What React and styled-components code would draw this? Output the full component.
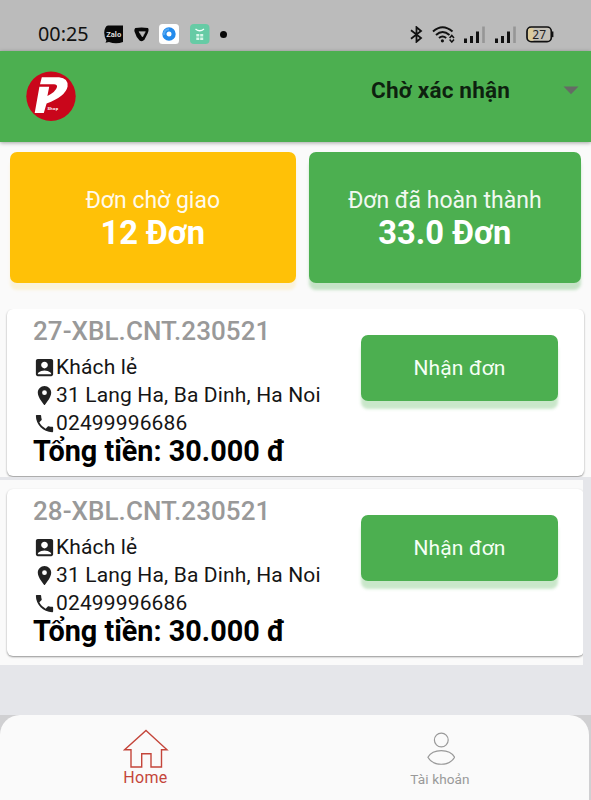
import React from 'react'
import styled, { createGlobalStyle } from 'styled-components'
import { MdAccountBox, MdLocationOn, MdPhone } from 'react-icons/md'

const GlobalStyle = createGlobalStyle`
  body {
    margin: 0;
    background: #fafafa;
    font-family: Roboto, "Liberation Sans", sans-serif;
  }
  svg {
    display: block;
    flex: none;
  }
`

const Screen = styled.div`
  display: flex;
  flex-direction: column;
  width: 591px;
  height: 800px;
  overflow: hidden;
  background: #fafafa;
`

const StatusBar = styled.div`
  display: flex;
  justify-content: space-between;
  box-sizing: border-box;
  height: 51px;
  padding: 17px 37px 0;
  background: #bbb;
`

const StatusGroup = styled.div`
  display: flex;
  align-items: center;
  height: 34px;
  gap: ${props => props.$gap};
`

const Clock = styled.span`
  width: 56.5px;
  padding-left: 1px;
  box-sizing: border-box;
  font: 19.8px/34px "Noto Sans", "Open Sans", sans-serif;
  color: #111;
`

const Header = styled.header`
  position: relative;
  display: flex;
  justify-content: space-between;
  box-sizing: border-box;
  height: 91px;
  padding: 20px 12px 0 26px;
  background: #4caf50;
  box-shadow: 0 1px 4px rgba(0, 0, 0, 0.35);
`

const Dropdown = styled.button`
  display: flex;
  align-items: center;
  justify-content: space-between;
  width: 208px;
  height: 39px;
  padding: 0;
  border: 0;
  background: none;
  font: 700 22.6px/26px Roboto, sans-serif;
  letter-spacing: 0.15px;
  color: rgba(0, 0, 0, 0.82);
`

const Stats = styled.section`
  display: grid;
  grid-template-columns: 285.5px 272.5px;
  column-gap: 13px;
  padding: 10px 10px 26px;
`

const StatCard = styled.div`
  display: flex;
  flex-direction: column;
  align-items: center;
  justify-content: center;
  box-sizing: border-box;
  height: 131px;
  padding-top: 3px;
  border-radius: 7px;
  color: #fff;
  background: ${props => props.$color};
  box-shadow: 0 7px 3px ${props => props.$shadow};
`

const StatLabel = styled.span`
  font-size: 23px;
  line-height: 28px;
  opacity: 0.92;
`

const StatValue = styled.strong`
  font-size: 32.7px;
  line-height: 37px;
`

const OrderList = styled.main`
  flex: 1;
  background: #e5e6ea;
`

const OrderSlot = styled.div`
  box-sizing: border-box;
  overflow: hidden;
  height: ${props => props.$height};
  margin: ${props => props.$margin || 0};
  padding: ${props => props.$padding};
  background: #fafafa;
`

const OrderCard = styled.article`
  display: flex;
  justify-content: space-between;
  box-sizing: border-box;
  width: 577px;
  height: 167px;
  padding: 7px 26px 0 26px;
  border-radius: 6px;
  background: #fff;
  box-shadow: 0 1px 2px rgba(0, 0, 0, 0.42);
`

const OrderId = styled.h2`
  margin: 0 0 7px;
  font-size: 26px;
  font-weight: 500;
  line-height: 30px;
  letter-spacing: 0.06px;
  color: #999;
`

const InfoRow = styled.div`
  display: flex;
  align-items: center;
  height: 28px;
  font-size: 21px;
  line-height: 28px;
  letter-spacing: 0.15px;
  white-space: nowrap;
  color: #151515;
  svg {
    color: #222;
  }
`

const Total = styled.div`
  margin-top: -2px;
  font-size: 28.8px;
  font-weight: 700;
  line-height: 32px;
  color: #000;
`

const AcceptButton = styled.button`
  width: 197px;
  height: 66px;
  margin: 19px 0 0;
  padding: 0;
  border: 0;
  border-radius: 7px;
  background: #4caf50;
  box-shadow: 0 8px 3px rgba(76, 175, 80, 0.3);
  font: 21px/28px Roboto, sans-serif;
  letter-spacing: 0.15px;
  color: #f5fff5;
`

const NavBack = styled.div`
  background: #d0d0d2;
`

const BottomNav = styled.nav`
  display: flex;
  width: 589px;
  height: 85px;
  border-radius: 20px 20px 0 0;
  background: #fafafa;
`

const NavItem = styled.a`
  display: flex;
  flex-direction: column;
  align-items: center;
  width: ${props => props.$width};
  padding-top: 14px;
  font-size: ${props => props.$size};
  line-height: 18px;
  letter-spacing: ${props => props.$spacing};
  color: ${props => props.$color};
`

const ZaloIcon = () => (
  <svg width='19' height='19' viewBox='0 0 19 19'>
    <path d='M4 .5H19V17Q12 19.5 5 17L1.5 17.8 2.4 15.5Q-1.5 8 1.5 2.5Q2.4.5 4 .5Z' fill='#080808' />
    <text x='2.2' y='11.7' fontFamily='Roboto, sans-serif' fontWeight='700' fontSize='7.5' textLength='15' lengthAdjust='spacingAndGlyphs' fill='#ddd'>Zalo</text>
  </svg>
)

const ShieldIcon = () => (
  <svg width='15' height='15' viewBox='0 0 15 15'>
    <path d='M1.3 1Q7.5 0 14 1Q15.3 3 13.6 6.5L10.5 12.6Q8.5 15 5.8 13.8Q2 10 .5 4.5Q0 2 1.3 1Z' fill='#080808' />
    <path d='M5 4.7H11.3L8.5 10Z' fill='#bbb' stroke='#bbb' strokeWidth='.6' strokeLinejoin='round' />
  </svg>
)

const BrowserIcon = () => (
  <svg width='20' height='20' viewBox='0 0 20 20'>
    <rect width='20' height='20' rx='3.5' fill='#fff' />
    <circle cx='10' cy='10' r='4.6' fill='none' stroke='#238bec' strokeWidth='4.2' />
    <path d='M5.2 11A4.8 4.8 0 0 1 10 5.2' fill='none' stroke='#54a8f3' strokeWidth='2' />
  </svg>
)

const StoreIcon = () => (
  <svg width='20' height='20' viewBox='0 0 20 20'>
    <rect width='19.5' height='20' rx='4' fill='#66cba5' />
    <path d='M5.5 5Q9.7 8.5 14 5' fill='none' stroke='#f2fffa' strokeWidth='1.3' />
    <path d='M6.3 10h3v2.5h-3zM10.2 10h3v2.5h-3zM6.3 13.4h3V16h-3zM10.2 13.4h3V16h-3z' fill='#d9f7ea' />
  </svg>
)

const DotIcon = () => (
  <svg width='7' height='7' viewBox='0 0 7 7'>
    <circle cx='3.5' cy='3.5' r='3.5' fill='#080808' />
  </svg>
)

const BluetoothIcon = () => (
  <svg width='13' height='17' viewBox='0 0 13 17'>
    <path d='M1 4.3 11 12 6.5 15.8V1.2L11 5 1 12.7' fill='none' stroke='#111' strokeWidth='1.8' />
  </svg>
)

const WifiIcon = () => (
  <svg width='23' height='17' viewBox='0 0 23 17'>
    <g fill='none' stroke='#111' strokeWidth='2'>
      <path d='M1 5.6Q10.5-3 20.5 5.6' />
      <path d='M4 9Q10.5 3 17.5 9' />
      <path d='M7 12Q10.5 9 14.2 12' />
    </g>
    <circle cx='10.4' cy='14.8' r='1.6' fill='#111' />
    <path d='M17.6 12 19.8 9.5 22 12M17.6 13.5 19.8 16 22 13.5' fill='none' stroke='#111' strokeWidth='1.5' />
  </svg>
)

const SignalIcon = () => (
  <svg width='22' height='17' viewBox='0 0 22 17'>
    <path d='M0 12.5h3V17H0zM6 10h3v7H6zM12 5.5h3V17h-3z' fill='#111' />
    <path d='M18.2.5h2.6V17h-2.6z' fill='#969696' />
  </svg>
)

const BatteryIcon = () => (
  <svg width='28' height='17' viewBox='0 0 28 17'>
    <rect x='1' y='1' width='24.3' height='14.6' rx='4.2' fill='#c5c1b8' stroke='#111' strokeWidth='1.7' />
    <path d='M5 2H7.5V14.7H5Q2 14.5 2 11.5V5Q2 2.2 5 2Z' fill='#dccb9c' />
    <path d='M26.6 5.5v5.6' stroke='#111' strokeWidth='1.6' />
    <text x='13.2' y='12.6' textAnchor='middle' fontFamily='Noto Sans, sans-serif' fontSize='12' fill='#222'>27</text>
  </svg>
)

const Logo = () => (
  <svg width='50' height='51' viewBox='0 0 50 51'>
    <circle cx='25' cy='25.3' r='24.7' fill='#c9061b' />
    <path d='M15.8 6.2H33Q42.5 7 41.6 15.5Q39.5 25.5 20.6 32.5L17.8 42H8.7L13.4 15.8H23.2L21.4 25Q30 20.5 31 16Q31.3 13.2 28 13.2H14Z' fill='#fff' />
    <text x='21.5' y='39' fontFamily='Roboto, sans-serif' fontWeight='700' fontSize='4.2' textLength='10.5' fill='#fff'>Shop</text>
  </svg>
)

const Caret = () => (
  <svg width='16' height='9' viewBox='0 0 16 9'>
    <path d='M.5.5H15.5L8 8.2Z' fill='#656b65' />
  </svg>
)

const HomeIcon = () => (
  <svg width='46' height='40' viewBox='0 0 46 40'>
    <path d='M23 1.5 44 20.8H38.5V38H28V24.8H18.7V38H8V20.8H1.6Z' fill='none' stroke='#c4453a' strokeWidth='1.4' />
  </svg>
)

const UserIcon = () => (
  <svg width='30' height='41' viewBox='0 0 30 41'>
    <g fill='none' stroke='#999' strokeWidth='1.2'>
      <circle cx='16.3' cy='11' r='6.9' />
      <path d='M2.9 28.3C8 19.4 24.6 19.4 29.6 28.3C24 37.6 8.5 37.6 2.9 28.3Z' />
    </g>
  </svg>
)

const Order = ({ order }) => (
  <OrderCard>
    <div>
      <OrderId>{order.id}</OrderId>
      <InfoRow><MdAccountBox size={23} />{order.customer}</InfoRow>
      <InfoRow><MdLocationOn size={23} />{order.address}</InfoRow>
      <InfoRow><MdPhone size={23} />{order.phone}</InfoRow>
      <Total>Tổng tiền: {order.total} đ</Total>
    </div>
    <AcceptButton>Nhận đơn</AcceptButton>
  </OrderCard>
)

const customer = {
  customer: 'Khách lẻ',
  address: '31 Lang Ha, Ba Dinh, Ha Noi',
  phone: '02499996686',
  total: '30.000'
}

// the first slot spans the whole width, the second leaves the list background visible
const orders = [
  { ...customer, id: '27-XBL.CNT.230521', height: '168px', padding: '0 0 0 7px' },
  { ...customer, id: '28-XBL.CNT.230521', height: '185px', padding: '9.4px 0 0 7px', margin: '3px 8px 0 0' }
]

function App () {
  return (
    <Screen>
      <GlobalStyle />
      <StatusBar>
        <StatusGroup $gap='10.5px'>
          <Clock>00:25</Clock>
          <ZaloIcon />
          <ShieldIcon />
          <BrowserIcon />
          <StoreIcon />
          <DotIcon />
        </StatusGroup>
        <StatusGroup $gap='8.9px'>
          <BluetoothIcon />
          <WifiIcon />
          <SignalIcon />
          <SignalIcon />
          <BatteryIcon />
        </StatusGroup>
      </StatusBar>
      <Header>
        <Logo />
        <Dropdown>
          Chờ xác nhận
          <Caret />
        </Dropdown>
      </Header>
      <Stats>
        <StatCard $color='#ffc107' $shadow='rgba(255, 193, 7, 0.13)'>
          <StatLabel>Đơn chờ giao</StatLabel>
          <StatValue>12 Đơn</StatValue>
        </StatCard>
        <StatCard $color='#4caf50' $shadow='rgba(76, 175, 80, 0.3)'>
          <StatLabel>Đơn đã hoàn thành</StatLabel>
          <StatValue>33.0 Đơn</StatValue>
        </StatCard>
      </Stats>
      <OrderList>
        {orders.map((order) => (
          <OrderSlot key={order.id} $height={order.height} $padding={order.padding} $margin={order.margin}>
            <Order order={order} />
          </OrderSlot>
        ))}
      </OrderList>
      <NavBack>
        <BottomNav>
          <NavItem $width='291px' $size='16px' $spacing='0.3px' $color='#c4453a'>
            <HomeIcon />
            Home
          </NavItem>
          <NavItem $width='298px' $size='13.6px' $spacing='0.1px' $color='#999'>
            <UserIcon />
            Tài khoản
          </NavItem>
        </BottomNav>
      </NavBack>
    </Screen>
  )
}

export default App
